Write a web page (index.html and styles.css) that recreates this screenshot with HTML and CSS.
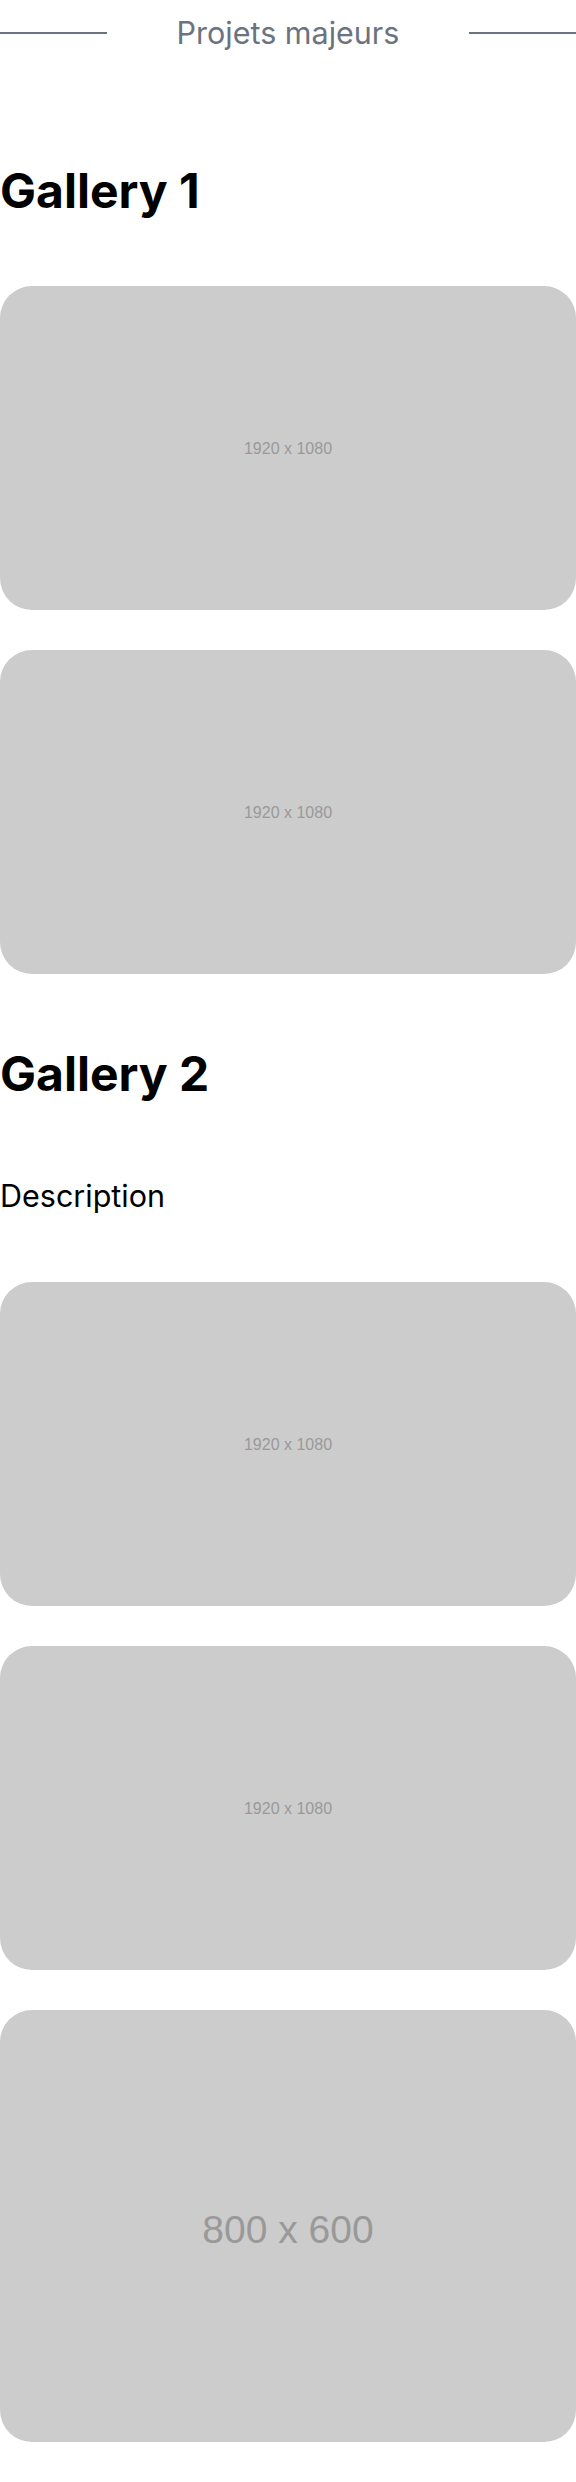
FILE: index.html
```html
<!DOCTYPE html>
<html lang="fr">
<head>
<meta charset="utf-8">
<title>Projets majeurs</title>
<link rel="stylesheet" href="styles.css">
</head>
<body>
<header class="title-row">
  <span class="rule"></span>
  <h1 class="title">Projets majeurs</h1>
  <span class="rule"></span>
</header>

<section class="section section-first">
  <h2 class="heading">Gallery 1</h2>
  <div class="gallery">
    <div class="ph ph-wide"><span class="ph-label">1920 x 1080</span></div>
    <div class="ph ph-wide"><span class="ph-label">1920 x 1080</span></div>
  </div>
</section>

<section class="section section-second">
  <h2 class="heading">Gallery 2</h2>
  <p class="desc">Description</p>
  <div class="gallery gallery-after-desc">
    <div class="ph ph-wide"><span class="ph-label">1920 x 1080</span></div>
    <div class="ph ph-wide"><span class="ph-label">1920 x 1080</span></div>
    <div class="ph ph-43"><span class="ph-label ph-label-big">800 x 600</span></div>
  </div>
</section>
</body>
</html>
```

FILE: styles.css
```css
html, body {
  margin: 0;
  padding: 0;
  background: #ffffff;
}

body {
  font-family: Inter, "Noto Sans", sans-serif;
  color: #000000;
  padding-bottom: 40px;
}

.title-row {
  display: flex;
  align-items: center;
  gap: 70px;
  padding-top: 15px;
}

.rule {
  flex: 1;
  height: 2px;
  background: #6b7280;
}

.title {
  margin: 0;
  font-size: 30.5px;
  line-height: 36px;
  font-weight: 400;
  color: #6b7280;
  white-space: nowrap;
}

.heading {
  margin: 0;
  font-size: 48px;
  line-height: 48px;
  font-weight: 700;
}

.section-first {
  margin-top: 116px;
}

.section-second {
  margin-top: 76px;
}

.desc {
  margin: 80px 0 0 0;
  font-size: 30.5px;
  line-height: 36px;
  font-weight: 400;
}

.gallery {
  display: flex;
  flex-direction: column;
  gap: 40px;
  margin-top: 71px;
}

.gallery-after-desc {
  margin-top: 68px;
}

.ph {
  background: #cccccc;
  border-radius: 32px;
  display: flex;
  align-items: center;
  justify-content: center;
  width: 100%;
}

.ph-wide {
  aspect-ratio: 16 / 9;
}

.ph-43 {
  aspect-ratio: 4 / 3;
}

.ph-label {
  font-family: "Liberation Sans", Arial, sans-serif;
  font-size: 16px;
  color: #999999;
  padding-top: 2px;
}

.ph-label-big {
  font-size: 39px;
  padding-top: 8px;
}
```
